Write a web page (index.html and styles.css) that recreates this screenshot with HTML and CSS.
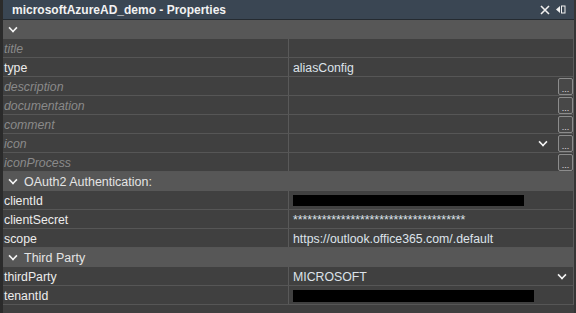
FILE: index.html
```html
<!DOCTYPE html>
<html lang="en">
    <head>
        <meta charset="UTF-8">
        <title>microsoftAzureAD_demo - Properties</title>
        <link rel="stylesheet" href="styles.css">
    </head>
    <body>
        <div class="panel">
            <div class="titlebar">
                <span class="title">microsoftAzureAD_demo - Properties</span>
                <span class="title-icons">
                    <svg width="10" height="10" viewBox="0 0 10 10"><path d="M1 1 L9 9 M9 1 L1 9" stroke="#f0f0f0" stroke-width="1.6"/></svg>
                    <svg width="10" height="9" viewBox="0 0 10 9"><path d="M0 4.5 L4 1 V8 Z" fill="#f0f0f0"/><rect x="5.5" y="1" width="3.5" height="7" fill="none" stroke="#f0f0f0" stroke-width="1"/></svg>
                </span>
            </div>
            <div class="table">
                <div class="group"><span class="chev"></span></div>

                <div class="row"><div class="key hint">title</div><div class="val"></div></div>
                <div class="row"><div class="key">type</div><div class="val">aliasConfig</div></div>
                <div class="row"><div class="key hint">description</div><div class="val"><span class="more">...</span></div></div>
                <div class="row"><div class="key hint">documentation</div><div class="val"><span class="more">...</span></div></div>
                <div class="row"><div class="key hint">comment</div><div class="val"><span class="more">...</span></div></div>
                <div class="row"><div class="key hint">icon</div><div class="val"><span class="chev drop"></span><span class="more">...</span></div></div>
                <div class="row"><div class="key hint">iconProcess</div><div class="val"><span class="more">...</span></div></div>

                <div class="group"><span class="chev"></span>OAuth2 Authentication:</div>
                <div class="row"><div class="key">clientId</div><div class="val"><span class="redact" style="width: 231px"></span></div></div>
                <div class="row"><div class="key">clientSecret</div><div class="val secret">************************************</div></div>
                <div class="row"><div class="key">scope</div><div class="val">https://outlook.office365.com/.default</div></div>

                <div class="group"><span class="chev"></span>Third Party</div>
                <div class="row"><div class="key">thirdParty</div><div class="val">MICROSOFT<span class="chev drop end"></span></div></div>
                <div class="row"><div class="key">tenantId</div><div class="val"><span class="redact tall" style="width: 241px"></span></div></div>
            </div>
        </div>
    </body>
</html>
```

FILE: styles.css
```css
body, html {
    margin: 0;
    height: 100%;
    background-color: #2b2b2b;
    font-family: "Liberation Sans", Arial, sans-serif;
    font-size: 12px;
}
.panel {
    margin-left: 3px;
    height: 313px;
    background-color: #3f3f3f;
    border-right: 2px solid #353535;
}
.titlebar {
    display: flex;
    align-items: center;
    height: 19px;
    padding: 0 8px 0 9px;
    background-color: #3a4653;
    border-bottom: 1px solid #252b31;
    color: #f2f2f2;
}
.title {
    flex: 1;
    font-weight: bold;
    font-size: 12px;
}
.title-icons {
    display: flex;
    align-items: center;
    gap: 6px;
}
.table {
    border-right: 1px solid #5a5a5a;
}
.group {
    display: flex;
    align-items: center;
    height: 19px;
    padding-top: 1px;
    box-sizing: border-box;
    background-color: #575757;
    color: #e4e4e4;
    font-size: 12.5px;
}
.group .chev {
    margin: 0 7px 0 6px;
}
.chev {
    display: inline-block;
    width: 6px;
    height: 6px;
    border-right: 2px solid #f4f4f4;
    border-bottom: 2px solid #f4f4f4;
    transform: translateY(-2px) rotate(45deg) scale(0.8);
}
.row {
    display: grid;
    grid-template-columns: 286px 1fr;
    height: 18px;
    border-bottom: 1px solid #565656;
    background-color: #404040;
}
.key {
    display: flex;
    align-items: center;
    padding: 1px 0 0 1px;
    border-right: 1px solid #595959;
    color: #ececec;
    font-size: 12.3px;
}
.key.hint {
    font-style: italic;
    color: #8a8a8a;
}
.val {
    display: flex;
    align-items: center;
    padding: 1px 0 0 4px;
    color: #dde3ea;
    font-size: 12.3px;
}
.more {
    margin-left: auto;
    width: 13px;
    height: 15px;
    border: 1px solid #8c8c8c;
    border-radius: 2px;
    background-color: #484848;
    color: #e0e0e0;
    font-size: 9px;
    line-height: 20px;
    text-align: center;
    overflow: hidden;
}
.drop {
    margin-left: auto;
    margin-right: 11px;
}
.drop + .more {
    margin-left: 0;
}
.drop.end {
    margin-right: 7px;
}
.redact {
    height: 11px;
    background-color: #000000;
}
.redact.tall {
    height: 12px;
}
```
